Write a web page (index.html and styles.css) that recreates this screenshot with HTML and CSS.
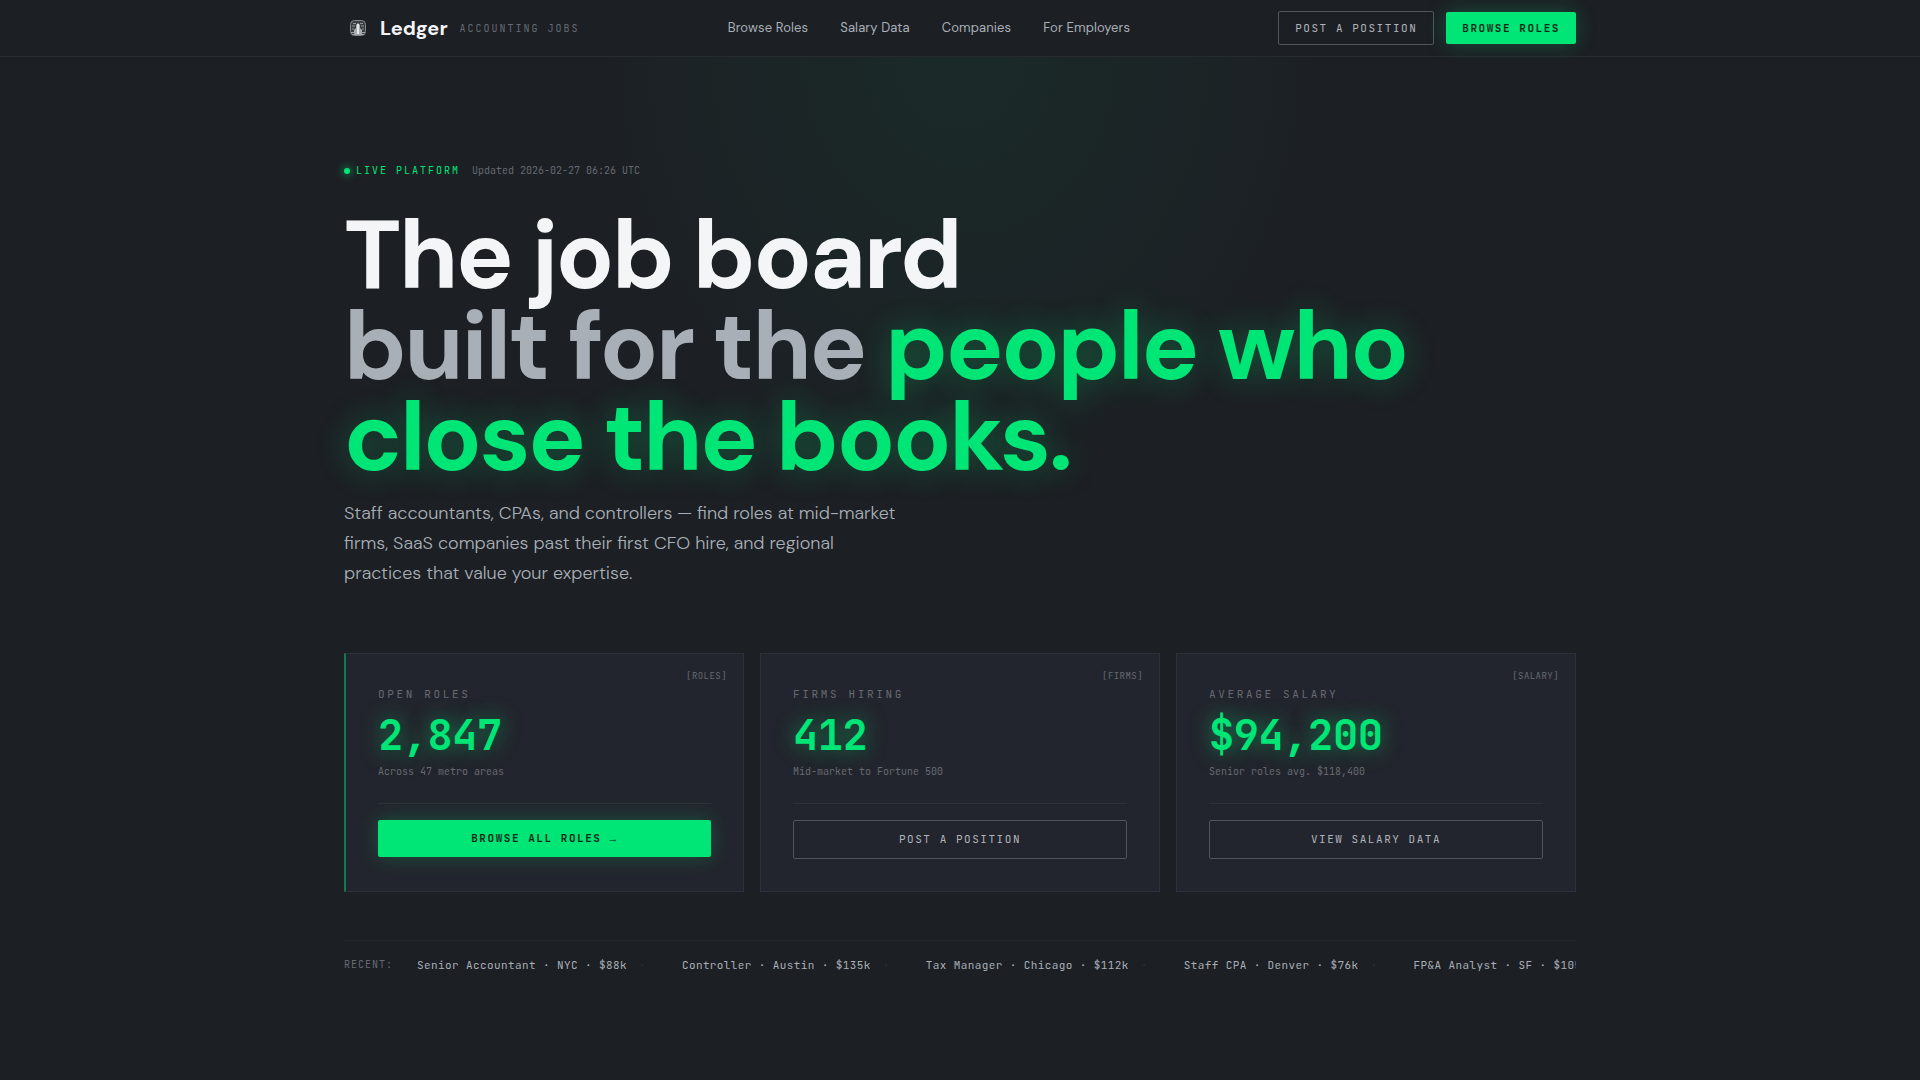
FILE: index.html
```html
<!DOCTYPE html>
<html lang="en">
<head>
<meta charset="utf-8">
<meta name="viewport" content="width=device-width, initial-scale=1">
<title>Ledger — Accounting Jobs</title>
<link rel="stylesheet" href="styles.css">
</head>
<body>
<header class="site-header">
  <div class="container header-row">
    <a class="brand" href="#">
      <svg class="brand-mark" viewBox="0 0 28 28" aria-hidden="true">
        <rect x="6.5" y="6.5" width="15" height="15" rx="4" fill="#3a3e43" stroke="#85898d"/>
        <path d="M9 9.5h3M16 9.5h3M8 12h3M17 12h3M8 15h2M18 15h2" stroke="#8f9498"/>
        <path d="M14 9l2 2v3l2 2v5h-8v-5l2-2v-3z" fill="#a9adb0"/>
        <path d="M14 10v11" stroke="#e4e6e8" stroke-width="2"/>
        <path d="M7 18.5h4M17 18.500h4M8 20.500h12" stroke="#a2a6aa"/>
      </svg>
      <span class="brand-name">Ledger</span>
      <span class="brand-tag">ACCOUNTING JOBS</span>
    </a>
    <nav class="main-nav" aria-label="Main">
      <a href="#">Browse Roles</a>
      <a href="#">Salary Data</a>
      <a href="#">Companies</a>
      <a href="#">For Employers</a>
    </nav>
    <div class="header-actions">
      <button class="btn btn-outline btn-small" type="button">POST A POSITION</button>
      <button class="btn btn-primary btn-small" type="button">BROWSE ROLES</button>
    </div>
  </div>
</header>

<main class="hero">
  <div class="container">
    <div class="status">
      <span class="status-dot"></span>
      <span class="status-live">LIVE PLATFORM</span>
      <span class="status-time">Updated 2026-02-27 06:26 UTC</span>
    </div>
    <h1 class="headline">The job board<br><span class="muted">built for the</span> <span class="accent">people who<br>close the books.</span></h1>
    <p class="lead">Staff accountants, CPAs, and controllers — find roles at mid-market firms, SaaS companies past their first CFO hire, and regional practices that value your expertise.</p>

    <div class="cards">
      <section class="card card-featured">
        <span class="card-tag">[ROLES]</span>
        <h2 class="card-label">OPEN ROLES</h2>
        <p class="card-value">2,847</p>
        <p class="card-note">Across 47 metro areas</p>
        <div class="card-action"><button class="btn btn-primary btn-wide" type="button">BROWSE ALL ROLES <span class="arrow">→</span></button></div>
      </section>
      <section class="card">
        <span class="card-tag">[FIRMS]</span>
        <h2 class="card-label">FIRMS HIRING</h2>
        <p class="card-value">412</p>
        <p class="card-note">Mid-market to Fortune 500</p>
        <div class="card-action"><button class="btn btn-outline btn-wide" type="button">POST A POSITION</button></div>
      </section>
      <section class="card">
        <span class="card-tag">[SALARY]</span>
        <h2 class="card-label">AVERAGE SALARY</h2>
        <p class="card-value">$94,200</p>
        <p class="card-note">Senior roles avg. $118,400</p>
        <div class="card-action"><button class="btn btn-outline btn-wide" type="button">VIEW SALARY DATA</button></div>
      </section>
    </div>

    <div class="ticker">
      <span class="ticker-label">RECENT:</span>
      <ul class="ticker-list">
        <li>Senior Accountant · NYC · $88k</li>
        <li>Controller · Austin · $135k</li>
        <li>Tax Manager · Chicago · $112k</li>
        <li>Staff CPA · Denver · $76k</li>
        <li>FP&amp;A Analyst · SF · $105k</li>
      </ul>
    </div>
  </div>
</main>
</body>
</html>
```

FILE: styles.css
```css
:root {
  --bg: #1c1f24;
  --card: #22252d;
  --line: #2e3238;
  --green: #00e676;
  --white: #f4f5f7;
  --soft: #a8afb6;
  --dim: #666a71;
  --sans: "DM Sans", Inter, sans-serif;
  --mono: "JetBrains Mono", "DejaVu Sans Mono", monospace;
}

* { box-sizing: border-box; margin: 0; padding: 0; }

body {
  min-height: 100vh;
  background: var(--bg);
  color: var(--white);
  font-family: var(--sans);
}

a { color: inherit; text-decoration: none; }

.container { max-width: 1280px; margin: 0 auto; padding: 0 24px; }

/* Header */
.site-header { background: var(--bg); border-bottom: 1px solid #272b30; }
.header-row { display: flex; align-items: center; justify-content: space-between; height: 56px; }
.brand { display: flex; align-items: center; gap: 8px; }
.brand-mark { width: 28px; height: 28px; }
.brand-name { font-size: 20px; font-weight: 700; line-height: 28px; }
.brand-tag { margin-left: 4px; font: 10px/13px var(--mono); letter-spacing: 0.2em; color: var(--dim); }
.main-nav { display: flex; gap: 32px; font-size: 13px; line-height: 20px; letter-spacing: 0.01em; color: var(--soft); }
.header-actions { display: flex; align-items: center; gap: 12px; }

/* Buttons */
.btn {
  border: 0;
  border-radius: 2px;
  font: 11px/16px var(--mono);
  letter-spacing: 0.14em;
  white-space: nowrap;
  cursor: pointer;
}
.btn-small { padding: 8px 16px; }
.btn-wide { width: 100%; padding: 10px 16px 11px; }
.btn-primary { background: var(--green); color: #0b2a1a; font-weight: 700; box-shadow: 0 0 20px rgba(0, 230, 118, 0.25); }
.btn-outline { border: 1px solid #50545b; background: transparent; color: #b0b4ba; }
.arrow { font-family: "Liberation Mono", monospace; font-weight: 400; line-height: 1; }

/* Hero */
.hero {
  padding: 106px 0;
  background: radial-gradient(ellipse 400px 460px at 50% 0, rgba(0, 230, 118, 0.055), transparent 100%);
}
.status { display: flex; align-items: center; gap: 6px; font: 10px/16px var(--mono); }
.status-dot { width: 6px; height: 6px; border-radius: 50%; background: var(--green); box-shadow: 0 0 8px var(--green); }
.status-live { letter-spacing: 0.2em; color: var(--green); }
.status-time { margin-left: 6px; color: var(--dim); }

.headline { margin-top: 31px; font-size: 96px; font-weight: 700; line-height: 91px; letter-spacing: -0.024em; }
.muted { color: var(--soft); }
.accent { color: var(--green); text-shadow: 0 0 32px rgba(0, 230, 118, 0.3); }
.lead { max-width: 560px; margin-top: 15px; font-size: 18px; font-weight: 300; line-height: 30px; color: var(--soft); }

/* Stat cards */
.cards { display: grid; grid-template-columns: repeat(3, 1fr); gap: 16px; margin-top: 65px; }
.card { position: relative; padding: 32px; border: 1px solid var(--line); background: var(--card); }
.card-featured { border-left: 2px solid #14794d; }
.card-tag { position: absolute; top: 16px; right: 16px; font: 9px/12px var(--mono); letter-spacing: 0.05em; color: var(--dim); }
.card-label { font: 11px/16px var(--mono); letter-spacing: 0.24em; color: var(--dim); }
.card-value { margin-top: 12px; font: 700 42px/42px var(--mono); letter-spacing: -0.01em; color: var(--green); text-shadow: 0 0 20px rgba(0, 230, 118, 0.5); }
.card-note { margin-top: 8px; font: 10px/15px var(--mono); color: var(--dim); }
.card-action { margin-top: 24px; padding-top: 16px; border-top: 1px solid var(--line); }

/* Recent roles */
.ticker { display: flex; align-items: center; gap: 24px; margin-top: 48px; padding-top: 16px; border-top: 1px solid #25292e; font-family: var(--mono); line-height: 16px; }
.ticker-label { font-size: 10px; letter-spacing: 0.1em; color: var(--dim); }
.ticker-list { display: flex; gap: 24px; min-width: 0; overflow: hidden; list-style: none; font-size: 11px; letter-spacing: 0.036em; color: var(--soft); }
.ticker-list li { flex: none; white-space: nowrap; }
.ticker-list li::after { content: "·"; margin: 0 12px; color: var(--line); }
```
